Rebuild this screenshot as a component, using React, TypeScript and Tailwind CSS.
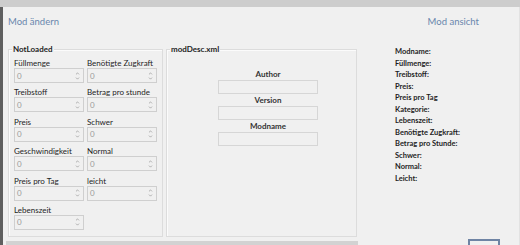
import { ChevronDown, ChevronUp } from "lucide-react";

const leftFields: [string, string][] = [
  ["Füllmenge", "Benötigte Zugkraft"],
  ["Treibstoff", "Betrag pro stunde"],
  ["Preis", "Schwer"],
  ["Geschwindigkeit", "Normal"],
  ["Preis pro Tag", "leicht"],
  ["Lebenszeit", ""],
];

const viewLabels = [
  "Modname:",
  "Füllmenge:",
  "Treibstoff:",
  "Preis:",
  "Preis pro Tag",
  "Kategorie:",
  "Lebenszeit:",
  "Benötigte Zugkraft:",
  "Betrag pro Stunde:",
  "Schwer:",
  "Normal:",
  "Leicht:",
];

function SpinField({ label }: { label: string }) {
  return (
    <div className="flex w-[70px] flex-col">
      <span className="h-[10px] whitespace-nowrap text-[8px] leading-[10px] text-[#1e1e1e]">{label}</span>
      <div className="flex h-[15px] items-center border border-[#cfcfcf] bg-[#f0f0f0]">
        <span className="flex-1 pl-[2px] text-[8px] leading-none text-[#9a9a9a]">0</span>
        <div className="mr-[3px] flex flex-col items-center text-[#8a8a8a]">
          <ChevronUp size={5} strokeWidth={3} />
          <ChevronDown size={5} strokeWidth={3} />
        </div>
      </div>
    </div>
  );
}

function GroupBox({
  title,
  className,
  children,
}: {
  title: string;
  className: string;
  children: React.ReactNode;
}) {
  return (
    <div className={`relative border border-[#dcdcdc] shadow-[inset_1px_1px_0_#fbfbfb] ${className}`}>
      <span className="absolute left-[3px] top-[-7px] bg-[#f0f0f0] px-[1px] text-[8px] font-bold leading-[12px] text-[#1e1e1e]">
        {title}
      </span>
      {children}
    </div>
  );
}

function TextRow({ label }: { label: string }) {
  return (
    <div className="flex flex-col items-center">
      <span className="h-[10px] text-[8px] font-bold leading-[10px] text-[#333]">{label}</span>
      <div className="mt-[1px] h-[14px] w-[100px] border border-[#d6d6d6] bg-[#f0f0f0]" />
    </div>
  );
}

export default function App() {
  return (
    <div
      className="relative flex h-[245px] w-[520px] flex-col overflow-hidden bg-[#f0f0f0]"
      style={{ fontFamily: 'Lato, "Noto Sans", sans-serif' }}
    >
      <div className="h-[7px] w-full bg-[#cdcdcd]" />
      <div className="flex flex-1 border-l-[3px] border-[#5f5f5f]">
        <div className="flex flex-1 flex-col border-r border-[#e2e2e2]">
          <div className="flex h-[30px] items-center justify-between pl-[5px] pr-[40px]">
            <span className="text-[9.5px] text-[#6a87ad]">Mod ändern</span>
            <span className="text-[9.5px] text-[#6a87ad]">Mod ansicht</span>
          </div>
          <div className="mt-[12px] flex">
            <GroupBox title="NotLoaded" className="ml-[5px] h-[188px] w-[155px]">
              <div className="flex flex-col gap-[4.4px] px-[5px] pt-[8px]">
                {leftFields.map(([a, b]) => (
                  <div key={a} className="flex gap-[3px]">
                    <SpinField label={a} />
                    {b && <SpinField label={b} />}
                  </div>
                ))}
              </div>
            </GroupBox>
            <GroupBox title="modDesc.xml" className="ml-[3px] h-[188px] w-[191px]">
              <div className="flex flex-col gap-[1px] pl-[13px] pt-[19px]">
                <TextRow label="Author" />
                <TextRow label="Version" />
                <TextRow label="Modname" />
              </div>
            </GroupBox>
            <div className="ml-[38px] mt-[-3px] flex flex-col">
              {viewLabels.map((l) => (
                <span key={l} className="h-[11.5px] whitespace-nowrap text-[7.5px] font-bold leading-[11.5px] text-[#1e1e1e]">
                  {l}
                </span>
              ))}
            </div>
          </div>
          <div className="mt-auto flex items-end">
            <div className="ml-[3px] h-[4px] w-[352px] bg-[#d2d2d2]" />
            <div className="ml-auto mr-[19px] h-[6px] w-[32px] border-x-2 border-t-2 border-[#6f84a4]" />
          </div>
        </div>
      </div>
    </div>
  );
}
